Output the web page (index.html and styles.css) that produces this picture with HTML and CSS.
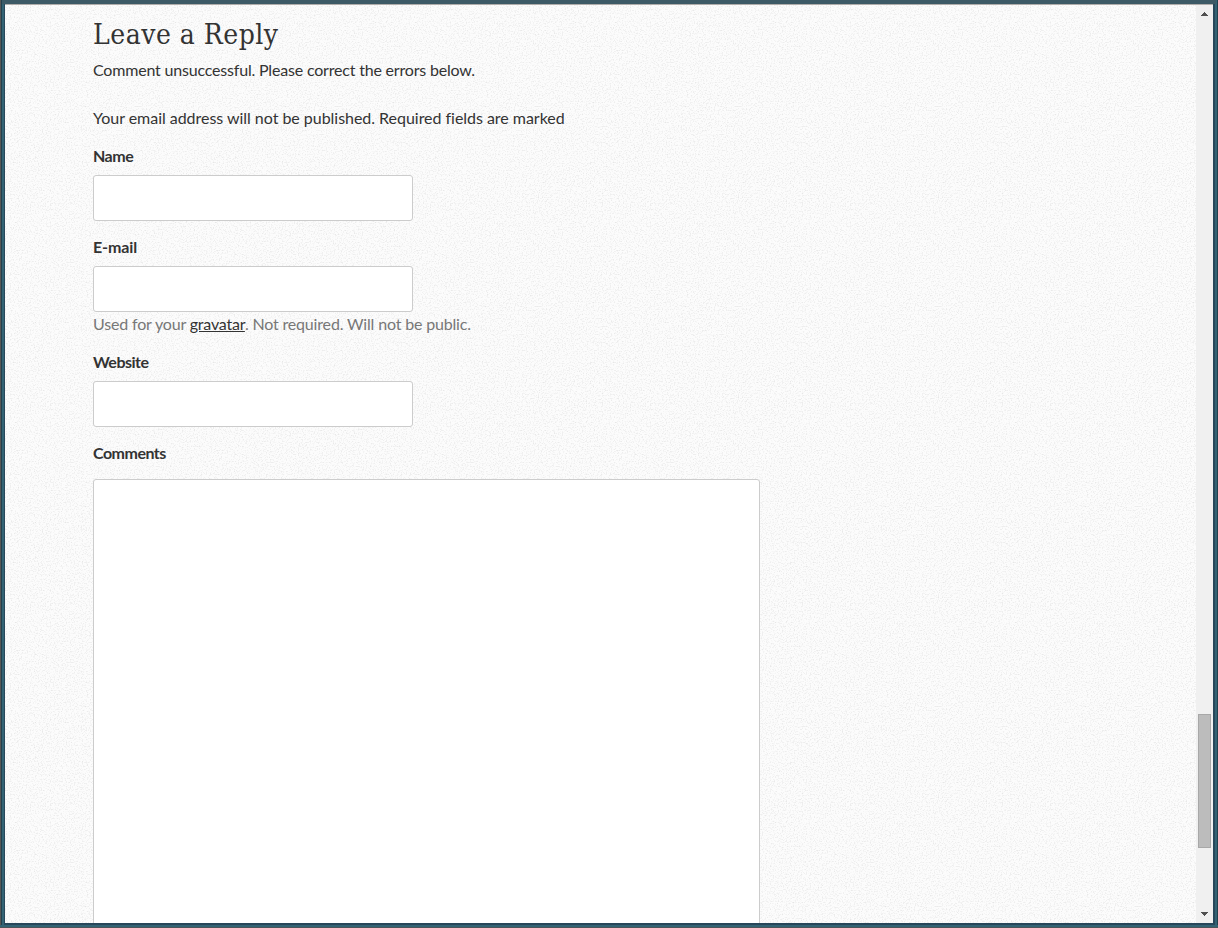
FILE: index.html
```html
<!DOCTYPE html>
<html lang="en">
<head>
<meta charset="utf-8">
<title>Leave a Reply</title>
<link rel="stylesheet" href="styles.css">
</head>
<body>
<div class="window">
  <main class="page">
    <h3 class="title">Leave a Reply</h3>
    <p class="notice error">Comment unsuccessful. Please correct the errors below.</p>
    <p class="notice notes">Your email address will not be published. Required fields are marked</p>
    <form class="form">
      <label class="label" for="name">Name</label>
      <input class="field" id="name" type="text">
      <label class="label label-email" for="email">E-mail</label>
      <input class="field" id="email" type="text">
      <p class="hint">Used for your <a class="link" href="#">gravatar</a>. Not required. Will not be public.</p>
      <label class="label" for="site">Website</label>
      <input class="field" id="site" type="text">
      <label class="label" for="comments">Comments</label>
      <textarea class="area" id="comments"></textarea>
    </form>
  </main>
  <div class="scrollbar">
    <svg class="arrow" width="7" height="4" shape-rendering="crispEdges"><path d="M3 0h1v1h1v1h1v1h1v1H0V3h1V2h1V1h1z"/></svg>
    <div class="thumb"></div>
    <svg class="arrow" width="7" height="4" shape-rendering="crispEdges"><path d="M0 0h7v1H6v1H5v1H4v1H3V3H2V2H1V1H0z"/></svg>
  </div>
</div>
</body>
</html>
```
FILE: styles.css
```css
* { box-sizing: border-box; }
body { margin: 0; height: 928px; overflow: hidden; background: #3b5865; }
.window {
  display: flex;
  height: 928px;
  padding: 4px 5px 5px;
  background:
    linear-gradient(#3d5a66, #3d5a66) 2px 0 / 1214px 4px no-repeat,
    linear-gradient(#27475a, #27475a) 4px 923px / 1211px 2px no-repeat,
    linear-gradient(90deg, #575655 1px, #23414e 1px 2px, #336374 2px 4px, #27475a 4px 5px, transparent 5px 1213px, #27475a 1213px 1215px, #336374 1215px 1217px, #23414e 1217px) 0 0 / 100% 925px no-repeat,
    linear-gradient(#336374 2px, #4b5559 2px) 0 925px / 100% 3px no-repeat;
}
.page {
  flex: 1;
  height: 919px;
  overflow: hidden;
  padding: 10px 0 0 88px;
  border-top: 1px solid #b0adab;
  background: #fafafa url("data:image/svg+xml,%3Csvg xmlns='http://www.w3.org/2000/svg' width='200' height='200'%3E%3Cfilter id='n' x='0' y='0' width='100%25' height='100%25'%3E%3CfeTurbulence type='fractalNoise' baseFrequency='.75' numOctaves='3' stitchTiles='stitch'/%3E%3CfeColorMatrix values='0 0 0 0 .4 0 0 0 0 .4 0 0 0 0 .4 1.8 0 0 0 -.85'/%3E%3C/filter%3E%3Cpath fill='%23fcfcfc' d='M0 0h200v200H0z'/%3E%3Crect width='200' height='200' filter='url(%23n)' opacity='.38'/%3E%3C/svg%3E");
  color: #333;
  font: 16px/24px Lato, "Noto Sans", sans-serif;
}
.title { margin: 0; font: 400 28px/40px "DejaVu Serif Condensed", "DejaVu Serif", serif; font-stretch: condensed; letter-spacing: .5px; }
.notice { margin: 3px 0 0; }
.error { letter-spacing: -.19px; }
.notes { margin-top: 24px; letter-spacing: -.03px; }
.form { display: flex; flex-direction: column; align-items: flex-start; margin-top: 14px; }
.label { height: 24px; margin-bottom: 7px; font-weight: 700; letter-spacing: -.5px; }
.label-email { letter-spacing: -.1px; }
.field { width: 320px; height: 46px; margin: 0 0 14px; border: 1px solid #ccc; border-radius: 3px; background: #fff; }
.hint { margin: -14px 0 14px; color: #777; letter-spacing: -.17px; }
.link { color: #333; }
.area { width: 667px; height: 500px; margin-top: 7px; border: 1px solid #ccc; border-radius: 3px; background: #fff; resize: none; }
.scrollbar { display: flex; flex-direction: column; align-items: center; width: 17px; padding: 7px 0; background: #f0f0f0; border-top: 1px solid #b0adab; }
.arrow { display: block; fill: #505050; }
.thumb { width: 13px; height: 134px; margin: 698px 0 auto; background: #bcbcbc; border: 1px solid #a8a8a8; }
```
